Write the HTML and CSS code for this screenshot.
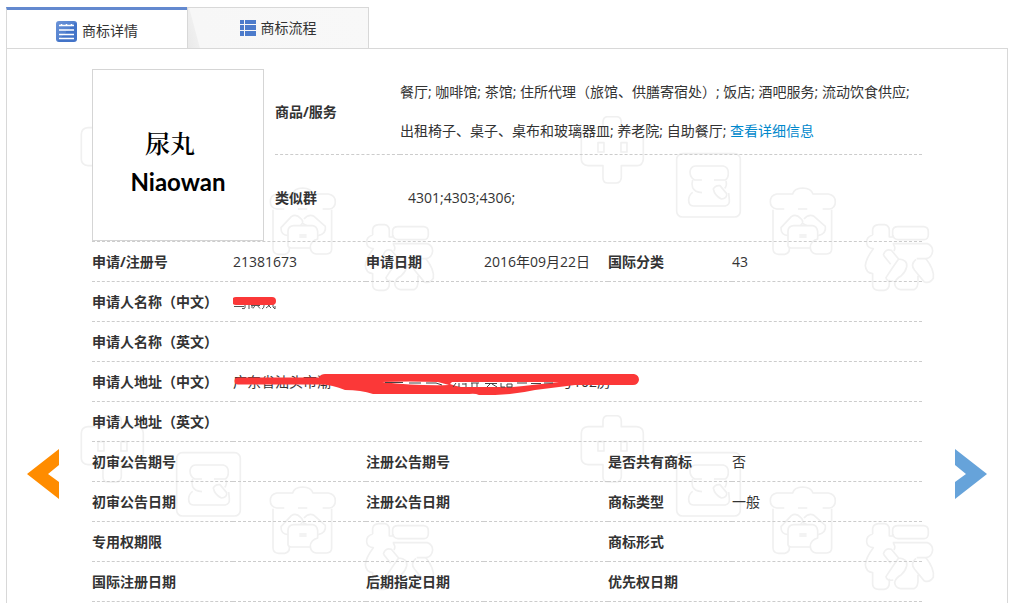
FILE: index.html
```html
<!DOCTYPE html>
<html lang="zh-CN">
<head>
<meta charset="utf-8">
<title>商标详情</title>
<link rel="stylesheet" href="styles.css">
</head>
<body>
<div class="tabs" role="tablist">
  <button class="tab tab-active" type="button" role="tab" aria-selected="true">
    <svg width="21" height="21" viewBox="0 0 21 21" aria-hidden="true">
      <defs><linearGradient id="blue" x1="0" y1="0" x2="1" y2="1"><stop offset="0" stop-color="#6b93d8"/><stop offset=".5" stop-color="#5482cf"/><stop offset=".5" stop-color="#4374c8"/><stop offset="1" stop-color="#4374c8"/></linearGradient></defs>
      <rect width="21" height="21" rx="3" fill="url(#blue)"/>
      <path d="M3 4.500H18M3 9H18M3 13.500H18M3 17.500H18M5.500 3v2M10.500 3v2M15.500 3v2" stroke="#fff" stroke-width="1.500"/>
    </svg>
    <span>商标详情</span>
  </button>
  <button class="tab tab-idle" type="button" role="tab" aria-selected="false">
    <svg width="16" height="16" viewBox="0 0 16 16" aria-hidden="true">
      <path d="M0 0h4v4H0zM5 0h11v4H5zM0 5h4v5H0zM5 5h11v5H5zM0 11h4v5H0zM5 11h11v5H5z" fill="#4c7bcb"/>
    </svg>
    <span>商标流程</span>
  </button>
</div>
<main class="panel">
  <svg class="watermark" aria-hidden="true">
    <defs>
      <pattern id="marks" x="73" y="67" width="500" height="299" patternUnits="userSpaceOnUse">
        <g fill="none" stroke="#f0f0f0" stroke-width="5" stroke-linejoin="round">
          <g transform="translate(-240 -15) scale(.3333)">
            <path d="M789 80V64Q789 47 804 47H829Q844 47 844 64V80H890Q910 82 910 100V175Q908 193 892 194H844V230Q842 246 829 246H804Q789 246 789 230V194H744Q724 192 724 175V100Q724 82 744 80Z"/>
            <path d="M774 125h18v28h-18zM843 125h18v28h-18z"/>
          </g>
          <g transform="translate(80 -15) scale(.3333)">
            <rect x="50" y="158" width="191" height="190" rx="17"/>
            <path d="M126 237H104Q90 230 90 212Q92 196 106 195H190Q205 198 205 216Q205 232 196 237H162M98 237Q94 250 98 260Q104 274 126 275M98 274Q86 282 86 298Q86 315 100 315H196Q210 312 208 296L206 276M198 240Q202 254 194 262"/>
            <path d="M160 264Q166 252 180 254L200 278Q202 292 184 294Q164 284 160 264Z"/>
            <path d="M373 324H350Q331 320 331 302Q331 283 350 279H398Q402 262 428 261Q454 262 459 279H505Q526 283 526 302Q526 322 508 324H488M414 324H442M339 326V444Q340 459 356 460H374Q390 456 388 441H451M515 326V444Q515 458 500 459H468Q451 456 451 438Q452 420 473 414V392Q471 376 458 374H400Q384 376 384 392V434Q386 441 394 441M418 402H440M418 408H440"/>
            <path d="M384 404Q362 402 363 380L394 347Q408 338 422 352Q434 362 422 373M432 354Q446 338 462 346L496 376Q500 398 474 404M428 358Q424 370 440 373"/>
            <path d="M638 402V386Q640 372 656 371H674Q688 374 688 388V408H698V388Q700 377 714 377H792Q805 379 805 392V402Q804 416 792 416H714Q700 414 699 402M638 402Q618 408 620 426Q622 442 640 443Q618 472 616 494Q618 516 638 518V554Q640 568 656 568H672Q688 566 688 548V536M698 428H802Q818 434 818 450Q816 470 798 473H770M700 430Q708 440 702 450"/>
            <path d="M670 462Q676 442 694 448L716 474Q700 496 678 530Q680 544 700 540M670 462L692 490M716 474Q744 476 740 498Q736 514 724 524Q706 534 704 548Q706 564 722 566H762Q776 560 774 536V524M768 475Q750 490 764 508L792 542Q808 550 820 532Q824 506 798 473"/>
          </g>
        </g>
      </pattern>
    </defs>
    <rect width="100%" height="100%" fill="url(#marks)"/>
  </svg>
  <button class="arrow arrow-prev" type="button" aria-label="上一条">
    <svg width="32" height="50" viewBox="0 0 32 50" aria-hidden="true"><path d="M0 25L32 0V16L21 25L32 33V50Z" fill="#ff8c00"/></svg>
  </button>
  <section class="detail">
    <div class="summary">
      <div class="mark">
        <span class="mark-cn">尿丸</span>
        <span class="mark-en">Niaowan</span>
      </div>
      <table class="services">
        <tr><th scope="row">商品/服务</th><td>餐厅; 咖啡馆; 茶馆; 住所代理（旅馆、供膳寄宿处）; 饭店; 酒吧服务; 流动饮食供应;<br>出租椅子、桌子、桌布和玻璃器皿; 养老院; 自助餐厅; <a href="#">查看详细信息</a></td></tr>
        <tr><th scope="row">类似群</th><td class="codes">4301;4303;4306;</td></tr>
      </table>
    </div>
    <table class="info">
      <colgroup><col class="c1"><col class="c2"><col class="c3"><col class="c4"><col class="c5"><col></colgroup>
      <tr><th scope="row">申请/注册号</th><td>21381673</td><th scope="row">申请日期</th><td>2016年09月22日</td><th scope="row">国际分类</th><td>43</td></tr>
      <tr><th scope="row">申请人名称（中文）</th><td colspan="5"><div class="covered">
        <svg class="cover" width="50" height="24" viewBox="0 0 50 24" aria-hidden="true">
          <path d="M1 15.500H11M12 13V17Q12 18 9 17.500M16 13V18M19 13V17M18 14.500H27M23 13L20 17.500M23 13L27 17.500M31 13V15Q31 17 29 18M33 17L38 13M34 13L38 17M40 13V16L42 18V15" fill="none" stroke="#555"/>
          <path d="M3 10H39" stroke="#fb3838" stroke-width="8" stroke-linecap="round"/>
        </svg></div></td></tr>
      <tr><th scope="row">申请人名称（英文）</th><td colspan="5"></td></tr>
      <tr><th scope="row">申请人地址（中文）</th><td colspan="5"><div class="covered"><span>广东省汕头市潮</span><span class="room">号102房</span>
        <svg class="cover" width="410" height="26" viewBox="0 0 410 26" aria-hidden="true">
          <path d="M5 10H90" stroke="#fb3838" stroke-width="7" stroke-linecap="round"/>
          <path d="M86 6Q88 3 92 3H401Q406 4 406 9Q405 14 400 14H342L326 16L302 19Q285 23 262 24H246Q242 22 236 23H140Q128 19 112 19Q100 14 86 13Z" fill="#fb3838"/>
          <path d="M149 11Q175 10 205 11L216 14Q185 15 149 11ZM219 11H326Q300 14 280 16H228Q222 15 217 13Z" fill="#fff"/>
          <path d="M152 11.500H170M176 12H188M193 12H203L209 14M223 12L220 16M226 12V16M229 13H233M233 12V16M238 12H246M239 12V16M244 12V16M252 12.500H264M258 12L254 16M259 13L264 16M268 12V16H272M274 13H279V16H274V13M284 12H294M298 12.500H308M311 12H320" fill="none" stroke="#444"/>
        </svg></div></td></tr>
      <tr><th scope="row">申请人地址（英文）</th><td colspan="5"></td></tr>
      <tr><th scope="row">初审公告期号</th><td></td><th scope="row">注册公告期号</th><td></td><th scope="row">是否共有商标</th><td>否</td></tr>
      <tr><th scope="row">初审公告日期</th><td></td><th scope="row">注册公告日期</th><td></td><th scope="row">商标类型</th><td>一般</td></tr>
      <tr><th scope="row">专用权期限</th><td></td><th scope="row"></th><td></td><th scope="row">商标形式</th><td></td></tr>
      <tr><th scope="row">国际注册日期</th><td></td><th scope="row">后期指定日期</th><td></td><th scope="row">优先权日期</th><td></td></tr>
    </table>
  </section>
  <button class="arrow arrow-next" type="button" aria-label="下一条">
    <svg width="32" height="50" viewBox="0 0 32 50" aria-hidden="true"><path d="M32 25L0 0V16L11 25L0 33V50Z" fill="#66a3da"/></svg>
  </button>
</main>
</body>
</html>
```
FILE: styles.css
```css
* { box-sizing: border-box; }
body {
  margin: 0;
  padding: 7px 6px 0;
  min-height: 100vh;
  display: flex;
  flex-direction: column;
  background: #fff;
  color: #333;
  font: 14px/20px "Open Sans", "Noto Sans CJK SC", sans-serif;
}
button { font: inherit; color: inherit; cursor: pointer; }
.tabs { display: flex; }
.tab {
  display: flex;
  align-items: center;
  justify-content: center;
  gap: 5px;
  width: 181px;
  height: 41px;
  padding: 0;
  border: 0 solid #d8d8d8;
  border-left-width: 1px;
}
.tab-active {
  border-top: 3px solid #6389cf;
  padding-top: 4px;
  background: #fff;
}
.tab-idle {
  width: 182px;
  border-width: 1px 1px 0;
  background: linear-gradient(75deg, #e9e9e9 0, #efefef 11px, #f7f7f7 12px, #f8f8f8 100%);
}
.panel {
  position: relative;
  flex: 1;
  display: grid;
  grid-template-columns: auto 1fr auto;
  align-items: start;
  border: 1px solid #d8d8d8;
  border-bottom: 0;
}
.watermark {
  position: absolute;
  inset: 0;
  width: 100%;
  height: 100%;
}
.arrow {
  position: relative;
  display: flex;
  margin-top: 400px;
  padding: 0;
  border: 0;
  background: none;
}
.arrow-prev { margin-left: 20px; margin-right: 33px; }
.arrow-next { margin-left: 33px; margin-right: 20px; }
.detail { position: relative; padding-top: 20px; }
.summary {
  display: flex;
  gap: 11px;
  border-bottom: 1px dashed #ccc;
}
.mark {
  flex: none;
  display: flex;
  flex-direction: column;
  align-items: center;
  width: 172px;
  height: 172px;
  padding-top: 52px;
  border: 1px solid #d5d5d5;
  background: #fff;
  color: #000;
}
.mark-cn {
  padding-right: 16px;
  font: 600 25px/40px "Noto Serif CJK SC", "Noto Sans CJK SC", serif;
}
.mark-en { font: bold 24px/40px Lato, sans-serif; }
table { border-collapse: separate; border-spacing: 0; table-layout: fixed; width: 100%; }
th, td { padding: 0; text-align: left; border-bottom: 1px dashed #ccc; white-space: nowrap; }
.services { flex: 1; }
.services th { width: 125px; }
.services th, .services td { height: 86px; line-height: 39px; }
.services td { padding-bottom: 2px; }
.services tr:last-child > * { border-bottom: 0; padding-bottom: 2px; }
.services .codes { padding-left: 8px; }
.services a { color: #0088cc; text-decoration: none; }
.info th, .info td { height: 40px; }
.c1 { width: 141px; }
.c2 { width: 133px; }
.c3 { width: 118px; }
.c4 { width: 124px; }
.c5 { width: 124px; }
.covered { position: relative; height: 20px; }
.covered .room { margin-left: 228px; }
.cover { position: absolute; left: 0; top: -1px; }
```
